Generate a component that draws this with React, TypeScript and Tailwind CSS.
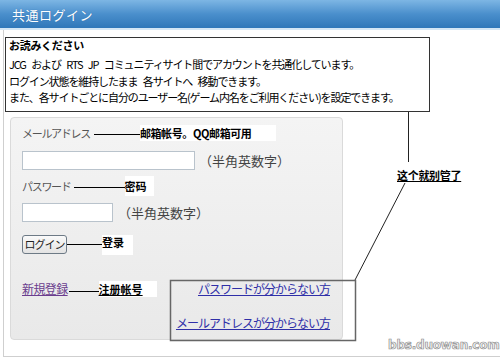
const jp = "font-['Noto_Sans_CJK_JP','Noto_Sans',sans-serif]";
const cn = "font-['Noto_Sans_CJK_SC','Noto_Sans',sans-serif]";

function Connector({ width }: { width: number }) {
  return <span className="block h-px bg-black shrink-0" style={{ width }} />;
}

export default function App() {
  return (
    <div className={`relative w-[500px] h-[361px] bg-white overflow-hidden ${jp}`}>
      <div className="h-[28px] flex items-center pl-[12px] bg-gradient-to-b from-[#7db6e4] via-[#4a8fcc] to-[#2f77b9]">
        <span className="text-white text-[13px] leading-none tracking-[0.5px] [text-shadow:0_0_1px_#2a6aa5]">共通ログイン</span>
      </div>
      <div className="h-[2px] bg-[#d3e6f5]" />

      <div className="ml-[3px] h-[327px] border-l border-b border-[#cfcfcf] pt-[7px]">
        {/* notice */}
        <div className="ml-[1px] w-[425px] h-[75px] border border-[#333] px-[3px] text-black">
          <div className="text-[11px] font-bold leading-[14px] tracking-[-0.3px]">お読みください</div>
          <div className="mt-[4px] text-[11px] leading-[16.5px] tracking-[-1.1px] [word-spacing:4px]">
            <p>JCG および RTS JP コミュニティサイト間でアカウントを共通化しています。</p>
            <p>ログイン状態を維持したまま 各サイトへ 移動できます。</p>
            <p>また、各サイトごとに自分のユーザー名(ゲーム内名をご利用ください)を設定できます。</p>
          </div>
        </div>

        {/* login panel */}
        <div className="ml-[6px] mt-[5px] w-[333px] h-[223px] rounded-[4px] border border-[#dadada] bg-gradient-to-b from-[#f4f4f4] to-[#e9e9e9] pl-[11px] pr-[12px] text-[#444]">
          <div className="mt-[7px] h-[16px] flex items-center">
            <span className="text-[11px] tracking-[-1.3px] text-[#555]">メールアドレス</span>
            <span className="ml-[4px] mt-[2px]"><Connector width={46} /></span>
            <span className={`${cn} text-[11px] font-bold text-black tracking-[-0.4px] bg-white pr-[25px]`}>邮箱帐号。QQ邮箱可用</span>
          </div>
          <div className="mt-[10px] flex items-center">
            <input className="w-[173px] h-[19px] bg-white border border-[#b9c3cc] outline-none" />
            <span className="ml-[4px] text-[13px] text-[#444] leading-none">（半角英数字）</span>
          </div>

          <div className="mt-[8px] h-[16px] flex items-center">
            <span className="text-[11px] tracking-[-1.3px] text-[#555]">パスワード</span>
            <span className="ml-[3px] mt-[2px]"><Connector width={51} /></span>
            <span className={`${cn} text-[11px] font-bold text-black bg-white pr-[7px] py-[2px]`}>密码</span>
          </div>
          <div className="mt-[9px] flex items-center">
            <input type="password" className="w-[91px] h-[19px] bg-white border border-[#b9c3cc] outline-none" />
            <span className="ml-[5px] text-[13px] text-[#444] leading-none">（半角英数字）</span>
          </div>

          <div className="mt-[13px] flex items-start">
            <button className="w-[45px] h-[19px] rounded-[3px] border border-[#6d7a86] bg-gradient-to-b from-[#fafafa] to-[#e3e3e3] text-[11px] tracking-[-1px] text-[#222] leading-none">
              ログイン
            </button>
            <span className="mt-[9px]"><Connector width={35} /></span>
            <span className={`${cn} text-[11px] font-bold text-black bg-white pr-[9px] pb-[5px] leading-[15px]`}>登录</span>
          </div>

          <div className="mt-[26px] flex items-start">
            <div className="h-[16px] flex items-center">
              <a className="text-[12px] text-[#6a3d8e] underline tracking-[-0.6px] cursor-pointer">新規登録</a>
              <span className="mt-[5px] ml-[1px]"><Connector width={30} /></span>
              <span className={`${cn} text-[11px] font-bold text-black underline bg-white pr-[14px]`}>注册帐号</span>
            </div>
            <div className="ml-auto flex flex-col items-end gap-[18px] leading-[16px]">
              <a className="text-[12px] text-[#2f2fa8] underline tracking-[-1px] cursor-pointer">パスワードが分からない方</a>
              <a className="text-[12px] text-[#2f2fa8] underline tracking-[-1px] cursor-pointer">メールアドレスが分からない方</a>
            </div>
          </div>
        </div>
      </div>

      {/* annotations overlay */}
      <svg className="absolute left-0 top-0 pointer-events-none" width="500" height="361">
        <line x1="408.5" y1="112" x2="408.5" y2="162" stroke="#222" strokeWidth="1" />
        <line x1="405" y1="183" x2="355" y2="280" stroke="#222" strokeWidth="1" />
        <rect x="170.5" y="280.5" width="185" height="60" fill="none" stroke="#666" strokeWidth="1.5" />
      </svg>
      <span className={`absolute left-[397px] top-[167px] ${cn} text-[11px] font-bold text-black underline leading-[16px] tracking-[-0.3px]`}>
        这个就别管了
      </span>
      <span className="absolute left-[388px] top-[338px] font-['DejaVu_Sans',sans-serif] font-bold text-[12px] leading-[14px] tracking-[-0.2px] text-[#f4f4f4] [-webkit-text-stroke:0.7px_#8f8f8f]">
        bbs.duowan.com
      </span>
    </div>
  );
}
